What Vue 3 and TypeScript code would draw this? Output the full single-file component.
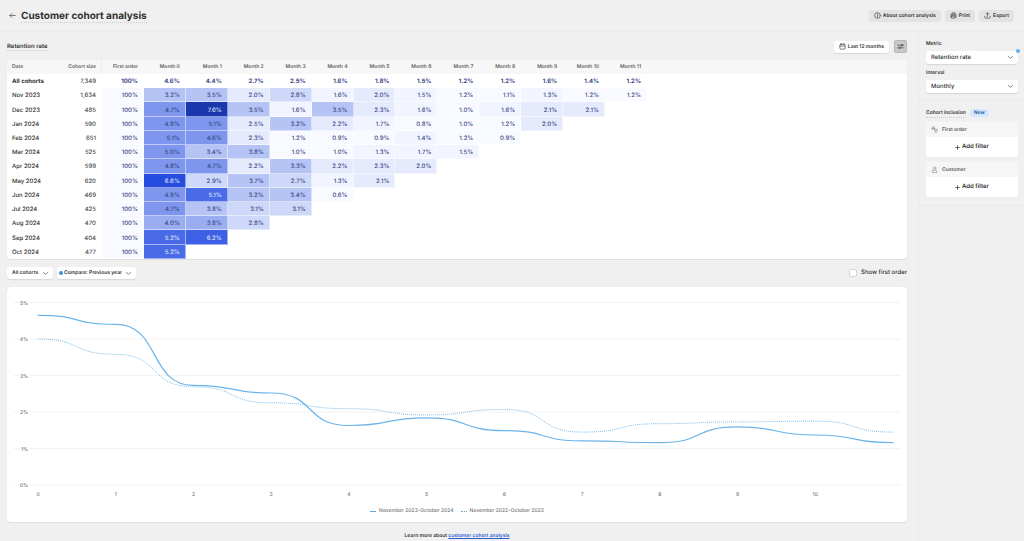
<script setup lang="ts">
import { computed, ref } from 'vue'

interface Cohort {
  label: string
  size: string
  rates: number[]
}

const months = Array.from({ length: 12 }, (_, i) => `Month ${i}`)

const total: Cohort = {
  label: 'All cohorts',
  size: '7,349',
  rates: [4.6, 4.4, 2.7, 2.5, 1.6, 1.8, 1.5, 1.2, 1.2, 1.6, 1.4, 1.2],
}

const cohorts: Cohort[] = [
  { label: 'Nov 2023', size: '1,634', rates: [3.2, 3.5, 2.0, 2.8, 1.6, 2.0, 1.5, 1.2, 1.1, 1.3, 1.2, 1.2] },
  { label: 'Dec 2023', size: '485', rates: [4.7, 7.6, 3.5, 1.6, 3.5, 2.3, 1.6, 1.0, 1.6, 2.1, 2.1] },
  { label: 'Jan 2024', size: '590', rates: [4.9, 5.1, 2.5, 3.2, 2.2, 1.7, 0.8, 1.0, 1.2, 2.0] },
  { label: 'Feb 2024', size: '651', rates: [5.1, 4.6, 2.3, 1.2, 0.9, 0.9, 1.4, 1.2, 0.9] },
  { label: 'Mar 2024', size: '525', rates: [5.0, 3.4, 3.8, 1.0, 1.0, 1.3, 1.7, 1.5] },
  { label: 'Apr 2024', size: '599', rates: [4.8, 4.7, 2.2, 3.3, 2.2, 2.3, 2.0] },
  { label: 'May 2024', size: '620', rates: [6.6, 2.9, 3.7, 2.7, 1.3, 2.1] },
  { label: 'Jun 2024', size: '469', rates: [4.9, 5.14, 3.2, 3.4, 0.6] },
  { label: 'Jul 2024', size: '425', rates: [4.7, 3.8, 3.1, 3.1] },
  { label: 'Aug 2024', size: '470', rates: [4.0, 3.84, 2.8] },
  { label: 'Sep 2024', size: '404', rates: [5.2, 6.2] },
  { label: 'Oct 2024', size: '477', rates: [5.2] },
]

const thresholds = [1.3, 2.0, 2.7, 3.2, 3.84, 4.5, 5.14, 6.0, 6.5, 7.0]
const heat = (rate: number): string => `heat-${thresholds.filter((t) => rate >= t).length}`

const current = [4.65, 4.4, 2.73, 2.52, 1.63, 1.84, 1.49, 1.21, 1.16, 1.59, 1.37, 1.16]
const previous = [4.0, 3.58, 2.69, 2.25, 2.09, 1.92, 2.07, 1.45, 1.68, 1.73, 1.75, 1.45]

const px = (i: number): number => 31 + (i * 855) / 11
const py = (v: number): number => 198 - v * 36.5

function curve(values: number[]): string {
  return values
    .map((v, i) => {
      if (i === 0) return `M${px(0)} ${py(v)}`
      const x0 = px(i - 1)
      const x1 = px(i)
      const reach = (x1 - x0) * 0.58
      return `C${x0 + reach} ${py(values[i - 1])} ${x1 - reach} ${py(v)} ${x1} ${py(v)}`
    })
    .join('')
}

const currentPath = computed(() => curve(current))
const previousPath = computed(() => curve(previous))
const showFirst = ref(false)
</script>

<template>
  <div class="page">
    <header class="topbar">
      <button class="back" type="button" aria-label="Back">
        <svg viewBox="0 0 16 16"><path d="M14.5 8H2M6.5 3.5 2 8l4.500 4.500" /></svg>
      </button>
      <h1><span class="dotted">Customer cohort analysis</span></h1>
      <div class="actions">
        <button class="action" type="button">
          <svg viewBox="0 0 16 16"><circle cx="8" cy="8" r="6.500" /><path d="M8 7.500v4M8 4.300v1.400" /></svg>
          About cohort analysis
        </button>
        <button class="action" type="button">
          <svg viewBox="0 0 16 16"><path d="M4.500 5V2h7v3M4 12H2V6.500L3 5h10l1 1.500V12h-2M4.500 9.500h7V14h-7zM4 7.500h8" /></svg>
          Print
        </button>
        <button class="action" type="button">
          <svg viewBox="0 0 16 16"><path d="M8 10.500V2M4.800 5 8 1.800 11.200 5M2 10v2.500Q2 14 3.500 14h9q1.500 0 1.500-1.500V10" /></svg>
          Export
        </button>
      </div>
    </header>

    <div class="body">
      <main class="main">
        <div class="row heading">
          <h2><span class="dotted">Retention rate</span></h2>
          <button class="pill" type="button">
            <svg viewBox="0 0 16 16"><rect x="2" y="3" width="12" height="11" rx="2" /><path d="M2 7h12M5 1v2.500M11 1v2.500" /></svg>
            Last 12 months
          </button>
          <button class="toggle" type="button" aria-label="Settings" aria-pressed="true">
            <svg viewBox="0 0 16 16"><path d="M1.500 5h8M13 5h1.500M1.500 11H4M8 11h6.500" /><circle cx="11" cy="5" r="2" /><circle cx="6" cy="11" r="2" /></svg>
          </button>
        </div>

        <section class="card">
          <table>
            <colgroup>
              <col class="c-date" /><col class="c-size" /><col v-for="n in 13" :key="n" /><col class="c-rest" />
            </colgroup>
            <thead>
              <tr>
                <th class="left" scope="col">Date</th>
                <th class="size" scope="col">Cohort size</th>
                <th scope="col">First order</th>
                <th v-for="m in months" :key="m" scope="col">{{ m }}</th>
                <td></td>
              </tr>
            </thead>
            <tbody>
              <tr class="total">
                <th class="left" scope="row">{{ total.label }}</th>
                <td class="size">{{ total.size }}</td>
                <td>100%</td>
                <td v-for="(r, i) in total.rates" :key="i">{{ r.toFixed(1) }}%</td>
                <td></td>
              </tr>
              <tr v-for="c in cohorts" :key="c.label">
                <th class="left" scope="row">{{ c.label }}</th>
                <td class="size">{{ c.size }}</td>
                <td class="heat-0">100%</td>
                <td v-for="(r, i) in c.rates" :key="i" :class="heat(r)">{{ r.toFixed(1) }}%</td>
              </tr>
            </tbody>
          </table>
        </section>

        <div class="row filters">
          <div class="drop">
            <select aria-label="Cohorts"><option>All cohorts</option></select>
            <svg class="chev" viewBox="0 0 16 16"><path d="M3.500 5.500 8 10l4.500-4.500" /></svg>
          </div>
          <div class="drop compare">
            <i class="dot"></i>
            <select aria-label="Comparison"><option>Compare: Previous year</option></select>
            <svg class="chev" viewBox="0 0 16 16"><path d="M3.500 5.500 8 10l4.500-4.500" /></svg>
          </div>
          <label class="check"><input v-model="showFirst" type="checkbox" />Show first order</label>
        </div>

        <section class="card chart">
          <svg class="plot" viewBox="0 0 900 217" role="img" aria-label="Retention rate by month">
            <template v-for="n in 6" :key="n">
              <line class="grid" x1="7" x2="893" :y1="py(n - 1)" :y2="py(n - 1)" />
              <rect class="mask" x="12" :y="py(n - 1) - 4" width="10" height="8" />
              <text class="tick end" x="21" :y="py(n - 1) + 2">{{ n - 1 }}%</text>
            </template>
            <text v-for="n in 11" :key="n" class="tick mid" :x="px(n - 1)" y="209">{{ n - 1 }}</text>
            <path class="prev" :d="previousPath" />
            <path class="cur" :d="currentPath" />
          </svg>
          <div class="legend">
            <span><i class="key"></i>November 2023–October 2024</span>
            <span><i class="key dots"></i>November 2022–October 2023</span>
          </div>
        </section>

        <p class="learn">Learn more about <a href="#">customer cohort analysis</a></p>
      </main>

      <aside class="side">
        <div class="group">
          <label for="metric">Metric</label>
          <div class="field">
            <select id="metric"><option>Retention rate</option></select>
            <svg class="chev" viewBox="0 0 16 16"><path d="M3.500 5.500 8 10l4.500-4.500" /></svg>
            <i class="flag"></i>
          </div>
          <label for="interval">Interval</label>
          <div class="field">
            <select id="interval"><option>Monthly</option></select>
            <svg class="chev" viewBox="0 0 16 16"><path d="M3.500 5.500 8 10l4.500-4.500" /></svg>
          </div>
        </div>
        <div class="group inclusion">
          <h3><span class="dotted">Cohort inclusion</span><span class="badge">New</span></h3>
          <section class="filter">
            <h4>
              <svg viewBox="0 0 16 16"><circle cx="5.500" cy="5.500" r="2" /><path d="M5.500 1v1M1 5.500h1M2.300 2.300l.7.7M8.700 2.300l-.7.7M2.300 8.700l.7-.7M8 7.500h6.500l-1 4.500H9L7.500 5.500M9.500 14.500h.5M13 14.500h.5" /></svg>
              First order
            </h4>
            <button type="button"><svg viewBox="0 0 16 16"><path d="M8 2v12M2 8h12" /></svg>Add filter</button>
          </section>
          <section class="filter">
            <h4>
              <svg viewBox="0 0 16 16"><circle cx="8" cy="5" r="3" /><path d="M2.500 14v-1.500q0-2.500 3-2.500h5q3 0 3 2.500V14z" /></svg>
              Customer
            </h4>
            <button type="button"><svg viewBox="0 0 16 16"><path d="M8 2v12M2 8h12" /></svg>Add filter</button>
          </section>
        </div>
      </aside>
    </div>
  </div>
</template>

<style>
body {
  margin: 0;
  background: #f0f0f0;
}
</style>

<style scoped>
.page {
  min-height: 100vh;
  display: flex;
  flex-direction: column;
  box-sizing: border-box;
  overflow: hidden;
  background: #f0f0f0;
  color: #303030;
  font-family: Inter, "Liberation Sans", sans-serif;
  font-size: 5px;
  line-height: 8px;
  font-weight: 600;
  text-rendering: geometricPrecision;
}
.page * {
  box-sizing: border-box;
}
button,
select,
input {
  font: inherit;
  color: inherit;
  text-rendering: inherit;
  margin: 0;
  border: 0;
  padding: 0;
  background: none;
}
svg {
  display: block;
  flex: none;
  width: 7px;
  height: 7px;
  fill: none;
  stroke: #4a4a4a;
  stroke-width: 1.600;
  stroke-linecap: round;
  stroke-linejoin: round;
}
h1,
h2,
h3,
h4,
p {
  margin: 0;
  font-size: inherit;
  font-weight: inherit;
}
.dotted {
  border-bottom: 1px dotted #cfcfcf;
}
.topbar {
  display: flex;
  align-items: center;
  height: 32px;
  padding: 0 10px 0 9px;
  border-bottom: 1px solid #ebebeb;
}
.back {
  width: 8px;
  margin-right: 4px;
}
h1 {
  padding-top: 1px;
  font-size: 10px;
  line-height: 13px;
  font-weight: 700;
}
.actions {
  display: flex;
  gap: 4px;
  margin-left: auto;
}
.action {
  display: flex;
  align-items: center;
  gap: 2px;
  height: 12px;
  padding: 0 5px;
  border-radius: 3px;
  background: #e3e3e3;
}
.body {
  flex: 1;
  display: flex;
}
.main {
  flex: 1;
  min-width: 0;
  padding: 0 11px 0 7px;
}
.row {
  display: flex;
  align-items: center;
}
.heading {
  height: 28px;
  padding-top: 1px;
  gap: 5px;
}
h2 {
  margin-right: auto;
  font-size: 6px;
}
.pill {
  display: flex;
  align-items: center;
  gap: 2px;
  height: 12px;
  padding: 0 5px;
  border-radius: 3px;
  background: #fff;
  box-shadow: 0 1px 1px #d6d6d6;
}
.toggle {
  display: grid;
  place-items: center;
  width: 13px;
  height: 13px;
  border-radius: 3px;
  background: #c9c9c9;
  box-shadow: inset 0 0 0 1px #b5b5b5;
}
.card {
  overflow: hidden;
  border-radius: 4px;
  background: #fff;
  box-shadow: 0 0 1px #cfcfcf, 0 1px 0 #e0e0e0;
}
table {
  width: 100%;
  height: 199px;
  table-layout: fixed;
  border-collapse: separate;
  border-spacing: 0;
}
.c-date {
  width: 44px;
}
.c-size {
  width: 51px;
}
.c-rest {
  width: 260px;
}
th,
td {
  padding: 1px 5px 0 0;
  border: 0 solid rgba(255, 255, 255, 0.5);
  border-width: 0 1px 1px 0;
  text-align: right;
  font-weight: 600;
  white-space: nowrap;
  color: #3a4787;
}
thead tr {
  height: 14px;
}
thead th,
thead td {
  background: #f7f7f7;
  color: #616161;
  border-color: #f7f7f7;
}
thead .size {
  border-right-color: #ececec;
}
.left {
  padding-left: 5px;
  text-align: left;
  color: #303030;
}
tbody th,
tbody td {
  padding-top: 3px;
  font-size: 6px;
  font-weight: 500;
}
thead .left {
  color: #616161;
}
tbody .size {
  color: #4a4a4a;
}
.total .left,
.total td:not(.size) {
  font-weight: 700;
}
.heat-0 {
  background: #f9faff;
}
.heat-1 {
  background: #f2f5ff;
}
.heat-2 {
  background: #e5eafc;
}
.heat-3 {
  background: #ced8f9;
}
.heat-4 {
  background: #b5c3f5;
}
.heat-5 {
  background: #9aadf1;
}
.heat-6 {
  background: #7e96ed;
}
.heat-7 {
  background: #4a6be8;
  color: #dce3fb;
}
.heat-8 {
  background: #3e60e4;
  color: #dce3fb;
}
.heat-9 {
  background: #264bdf;
  color: #dce3fb;
}
.heat-10 {
  background: #1b37ac;
  color: #dce3fb;
}
.filters {
  height: 28px;
  gap: 4px;
}
.drop {
  position: relative;
  display: flex;
  align-items: center;
  height: 12px;
  border-radius: 3px;
  background: #fff;
  box-shadow: 0 1px 1px #d6d6d6;
}
select {
  appearance: none;
  height: 100%;
  padding: 0 14px 0 5px;
  outline: none;
}
.compare select {
  padding-left: 1px;
}
.dot {
  width: 4px;
  height: 4px;
  margin-left: 2px;
  border-radius: 50%;
  background: #3d92de;
}
.chev {
  position: absolute;
  right: 4px;
  pointer-events: none;
}
.check {
  display: flex;
  align-items: center;
  gap: 4px;
  margin-left: auto;
  font-size: 6px;
  font-weight: 500;
}
.check input {
  appearance: none;
  width: 8px;
  height: 8px;
  border: 1px solid #d4d4d4;
  border-radius: 2px;
  background: #fff;
}
.check input:checked {
  background: #303030;
}
.plot {
  width: 100%;
  height: auto;
}
.grid {
  stroke: #f2f2f2;
  stroke-width: 1;
}
.mask {
  fill: #fff;
  stroke: none;
}
.tick {
  fill: #757575;
  stroke: none;
  font-size: 5px;
  font-weight: 500;
}
.end {
  text-anchor: end;
}
.mid {
  text-anchor: middle;
}
.cur {
  stroke: #6ab4ea;
  stroke-width: 1.200;
}
.prev {
  stroke: #7fbdec;
  stroke-width: 1;
  stroke-linecap: butt;
  stroke-dasharray: 1 1;
}
.legend {
  display: flex;
  justify-content: center;
  gap: 7px;
  height: 18px;
  padding-top: 2px;
  font-weight: 500;
  color: #757575;
}
.legend span {
  display: flex;
  align-items: center;
  gap: 3px;
  height: 10px;
}
.key {
  width: 6px;
  border-top: 1px solid #5aabe8;
}
.dots {
  border-top-style: dotted;
}
.learn {
  padding: 10px 0 0;
  text-align: center;
}
a {
  color: #2a5bd0;
}
.side {
  width: 106px;
  border-left: 1px solid #e9e9e9;
}
.group {
  padding: 8px 6px 7px 7px;
}
.group label {
  display: block;
  height: 11px;
}
.field {
  position: relative;
  display: flex;
  align-items: center;
  height: 13px;
  margin-bottom: 5px;
  border-radius: 3px;
  background: #fff;
  box-shadow: 0 1px 1px #d6d6d6;
}
.field:last-child {
  margin-bottom: 0;
}
.field select {
  width: 100%;
  font-size: 6px;
  font-weight: 500;
}
.flag {
  position: absolute;
  top: -2px;
  right: -2px;
  width: 4px;
  height: 4px;
  border-radius: 50%;
  background: #5cb2f5;
}
.inclusion {
  padding-bottom: 3px;
  border-top: 1px solid #e9e9e9;
  border-bottom: 1px solid #e9e9e9;
}
h3 {
  display: flex;
  align-items: center;
  gap: 4px;
  height: 8px;
  margin-bottom: 5px;
}
.badge {
  padding: 0 4px;
  border-radius: 4px;
  background: #d5e8fd;
  color: #1f5d94;
}
.filter {
  margin-bottom: 5px;
  border-radius: 3px;
  overflow: hidden;
  background: #fff;
}
h4 {
  display: flex;
  align-items: center;
  gap: 4px;
  height: 15px;
  padding-left: 5px;
  background: #f6f6f6;
  color: #5c5c5c;
}
h4 svg {
  stroke: #777;
  stroke-width: 1.200;
}
.filter button {
  display: flex;
  align-items: center;
  justify-content: center;
  gap: 2px;
  width: 100%;
  height: 20px;
  font-size: 6px;
}
.filter button svg {
  width: 5px;
  height: 5px;
  stroke-width: 2.500;
}
</style>
